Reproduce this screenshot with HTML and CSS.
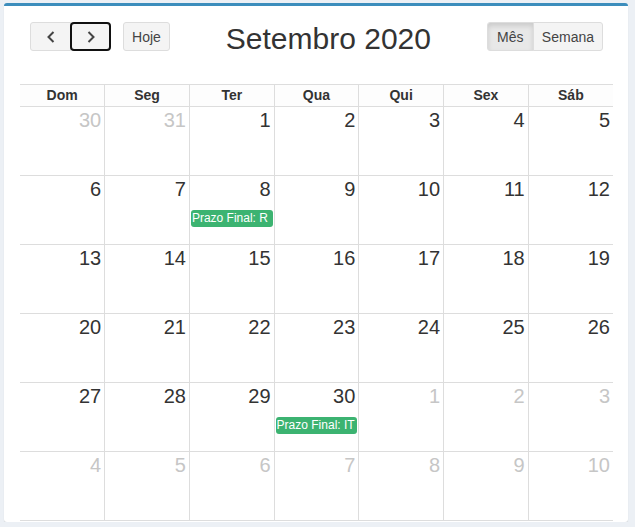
FILE: index.html
```html
<!DOCTYPE html>
<html lang="pt">
<head>
<meta charset="utf-8">
<title>Calendário</title>
<link rel="stylesheet" href="styles.css">
</head>
<body>
<div class="box">
  <div class="toolbar">
    <div class="tb-left">
      <div class="btn-group">
        <button class="btn btn-icon" aria-label="Anterior"><svg width="8" height="12" viewBox="0 0 8 12"><polyline points="6.5,1 1.5,6 6.5,11" fill="none" stroke="#444" stroke-width="2"/></svg></button>
        <button class="btn btn-icon focused" aria-label="Próximo"><svg width="8" height="12" viewBox="0 0 8 12"><polyline points="1.5,1 6.5,6 1.5,11" fill="none" stroke="#444" stroke-width="2"/></svg></button>
      </div>
      <button class="btn btn-today">Hoje</button>
    </div>
    <div class="tb-center"><h2 class="title">Setembro 2020</h2></div>
    <div class="tb-right">
      <div class="btn-group">
        <button class="btn active">Mês</button>
        <button class="btn">Semana</button>
      </div>
    </div>
  </div>
  <table class="cal">
    <thead>
      <tr><th>Dom</th><th>Seg</th><th>Ter</th><th>Qua</th><th>Qui</th><th>Sex</th><th>Sáb</th></tr>
    </thead>
    <tbody>
      <tr>
        <td class="other"><div class="num">30</div></td>
        <td class="other"><div class="num">31</div></td>
        <td><div class="num">1</div></td>
        <td><div class="num">2</div></td>
        <td><div class="num">3</div></td>
        <td><div class="num">4</div></td>
        <td><div class="num">5</div></td>
      </tr>
      <tr>
        <td><div class="num">6</div></td>
        <td><div class="num">7</div></td>
        <td><div class="num">8</div><div class="event">Prazo Final: R</div></td>
        <td><div class="num">9</div></td>
        <td><div class="num">10</div></td>
        <td><div class="num">11</div></td>
        <td><div class="num">12</div></td>
      </tr>
      <tr>
        <td><div class="num">13</div></td>
        <td><div class="num">14</div></td>
        <td><div class="num">15</div></td>
        <td><div class="num">16</div></td>
        <td><div class="num">17</div></td>
        <td><div class="num">18</div></td>
        <td><div class="num">19</div></td>
      </tr>
      <tr>
        <td><div class="num">20</div></td>
        <td><div class="num">21</div></td>
        <td><div class="num">22</div></td>
        <td><div class="num">23</div></td>
        <td><div class="num">24</div></td>
        <td><div class="num">25</div></td>
        <td><div class="num">26</div></td>
      </tr>
      <tr>
        <td><div class="num">27</div></td>
        <td><div class="num">28</div></td>
        <td><div class="num">29</div></td>
        <td><div class="num">30</div><div class="event">Prazo Final: IT</div></td>
        <td class="other"><div class="num">1</div></td>
        <td class="other"><div class="num">2</div></td>
        <td class="other"><div class="num">3</div></td>
      </tr>
      <tr>
        <td class="other"><div class="num">4</div></td>
        <td class="other"><div class="num">5</div></td>
        <td class="other"><div class="num">6</div></td>
        <td class="other"><div class="num">7</div></td>
        <td class="other"><div class="num">8</div></td>
        <td class="other"><div class="num">9</div></td>
        <td class="other"><div class="num">10</div></td>
      </tr>
    </tbody>
  </table>
</div>
</body>
</html>
```

FILE: styles.css
```css
html, body {
  margin: 0;
  padding: 0;
}
body {
  background: #ecf0f5;
  font-family: "Liberation Sans", Arial, sans-serif;
  color: #333;
  padding: 3px 7px 0 4px;
}
.box {
  background: #fff;
  border-top: 3px solid #3c8dbc;
  border-radius: 3px;
  box-shadow: 0 1px 1px rgba(0, 0, 0, 0.12);
  padding: 16px 15px 1px 16px;
}
.toolbar {
  display: flex;
  align-items: center;
  padding: 0 10px;
  height: 29px;
  margin-bottom: 33px;
}
.tb-left, .tb-right {
  display: flex;
  align-items: center;
}
.tb-center {
  flex: 1;
  text-align: center;
}
.title {
  margin: 0;
  font-size: 30px;
  font-weight: normal;
  line-height: 33px;
  color: #333;
  position: relative;
  top: 2px;
}
.btn-group {
  display: flex;
}
.btn {
  font-family: "Liberation Sans", Arial, sans-serif;
  font-size: 14px;
  color: #444;
  background: #f4f4f4;
  border: 1px solid #ddd;
  height: 29px;
  padding: 0 8px;
  margin: 0;
  border-radius: 3px;
  display: flex;
  align-items: center;
  justify-content: center;
}
.btn-group .btn:first-child {
  border-top-right-radius: 0;
  border-bottom-right-radius: 0;
}
.btn-group .btn:last-child {
  border-top-left-radius: 0;
  border-bottom-left-radius: 0;
  margin-left: -1px;
}
.btn-icon {
  width: 41px;
}
.btn-group .btn.focused {
  border: 2px solid #111;
  border-radius: 4px;
  position: relative;
  z-index: 1;
}
.btn-today {
  margin-left: 12px;
  width: 47px;
}
.btn.active {
  background: #e8e8e8;
  box-shadow: inset 0 3px 5px rgba(0, 0, 0, 0.125);
  width: 47px;
}
.cal {
  width: 593px;
  border-collapse: collapse;
  table-layout: fixed;
}
.cal th {
  font-size: 14px;
  font-weight: bold;
  color: #333;
  height: 21px;
  padding: 0;
  border-top: 1px solid #ddd;
  border-bottom: 1px solid #ddd;
  border-left: 1px solid #ddd;
  background: #fdfdfd;
  line-height: 21px;
}
.cal td {
  height: 68px;
  padding: 0;
  vertical-align: top;
  border-bottom: 1px solid #ddd;
  border-left: 1px solid #ddd;
}
.cal th:first-child, .cal td:first-child {
  border-left: none;
}
.num {
  font-size: 20px;
  line-height: 22px;
  text-align: right;
  padding: 2px 3px 0 0;
  color: #333;
}
.other .num {
  color: #c6c6c6;
}
.event {
  margin: 10px 1px 0 1px;
  height: 17px;
  line-height: 17px;
  background: #3cb371;
  color: #fff;
  font-size: 12px;
  border-radius: 3px;
  padding: 0 0 0 1px;
  white-space: nowrap;
  overflow: hidden;
}
```
